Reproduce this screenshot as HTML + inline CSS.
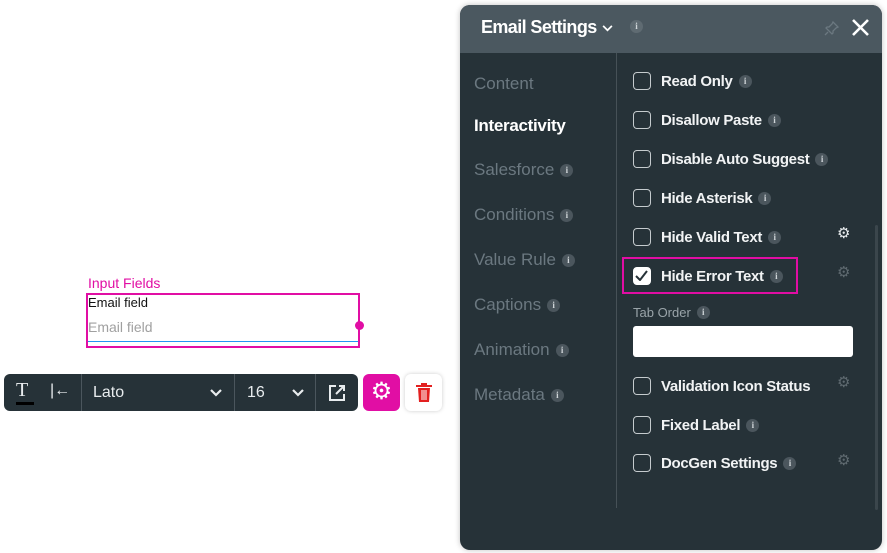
<!DOCTYPE html>
<html><head><meta charset="utf-8"><style>
*{margin:0;padding:0;box-sizing:border-box}
body{width:887px;height:553px;background:#fff;position:relative;overflow:hidden;font-family:"Liberation Sans",sans-serif}
.a{position:absolute}
.panel{left:460px;top:5px;width:422px;height:545px;background:#263238;border-radius:10px;overflow:hidden;box-shadow:0 0 6px rgba(0,0,0,.25)}
.hdr{left:0;top:0;width:422px;height:48px;background:#4b5860}
.nav{left:14px;font-size:17px;color:#6b7880;white-space:nowrap}
.i{display:inline-block;width:13px;height:13px;border-radius:50%;background:#4b565d;color:#cfd5d8;font-size:9px;font-weight:bold;text-align:center;line-height:13px;vertical-align:2px;margin-left:6px;font-family:"Liberation Serif",serif}
.row{left:173px;font-size:15px;font-weight:bold;color:#f1f3f4;white-space:nowrap;line-height:18px;letter-spacing:-0.3px}
.cb{display:inline-block;width:18px;height:18px;border:1.5px solid #c5cbce;border-radius:4px;vertical-align:-4px;margin-right:10px}
.gear{left:377px;font-size:15px;color:#5f6a70}
</style></head><body>
<div class="a" style="left:88px;top:275px;font-size:14px;color:#e10ea4">Input Fields</div>
<div class="a" style="left:86px;top:293px;width:274px;height:55px;border:2px solid #e10ea4"></div>
<div class="a" style="left:88px;top:295px;font-size:13px;color:#111">Email field</div>
<div class="a" style="left:88px;top:319px;font-size:14px;color:#a0a0a0">Email field</div>
<div class="a" style="left:88px;top:341px;width:270px;height:1px;background:#2196f3"></div>
<div class="a" style="left:355px;top:321px;width:9px;height:9px;border-radius:50%;background:#e10ea4"></div>
<div class="a" style="left:4px;top:374px;width:354px;height:37px;background:#263238;border-radius:6px;color:#e8ecee">
 <div class="a" style="left:12px;top:5px;font-size:20px;font-family:'Liberation Serif',serif">T</div>
 <div class="a" style="left:12px;top:28px;width:18px;height:3px;background:#000"></div>
 <div class="a" style="left:46px;top:8px;font-size:16px">|←</div>
 <div class="a" style="left:77px;top:0;width:1px;height:37px;background:#4b565d"></div>
 <div class="a" style="left:89px;top:10px;font-size:16px">Lato</div>
 <svg class="a" style="left:206px;top:15px" width="12" height="8" viewBox="0 0 12 8" fill="none" stroke="#e8ecee" stroke-width="2.2"><path d="M1 1l5 5 5-5"/></svg>
 <div class="a" style="left:230px;top:0;width:1px;height:37px;background:#4b565d"></div>
 <div class="a" style="left:243px;top:10px;font-size:16px">16</div>
 <svg class="a" style="left:288px;top:15px" width="12" height="8" viewBox="0 0 12 8" fill="none" stroke="#e8ecee" stroke-width="2.2"><path d="M1 1l5 5 5-5"/></svg>
 <div class="a" style="left:311px;top:0;width:1px;height:37px;background:#4b565d"></div>
 <svg class="a" style="left:324px;top:10px" width="18" height="18" viewBox="0 0 18 18" fill="none" stroke="#e8ecee" stroke-width="2"><path d="M8 2H2v14h14v-6M11 2h5v5M16 2L8 10"/></svg>
</div>
<div class="a" style="left:363px;top:374px;width:37px;height:37px;background:#e10ea4;border-radius:6px;color:#fff;font-size:24px;text-align:center;line-height:36px">⚙</div>
<div class="a" style="left:405px;top:374px;width:37px;height:37px;background:#fff;border-radius:6px;box-shadow:0 0 4px rgba(0,0,0,.2)">
 <svg class="a" style="left:11px;top:9px" width="16" height="19" viewBox="0 0 16 19"><rect x="0" y="2" width="16" height="2" fill="#e32020"/><rect x="5" y="0" width="6" height="2" fill="#e32020"/><path d="M2 5h12l-1 14H3z" fill="#e32020"/><path d="M6 7v10M8 7v10M10 7v10" stroke="#fff" stroke-width="1"/></svg>
</div>

<div class="a panel">
 <div class="a hdr"></div>
 <div class="a" style="left:21px;top:12px;font-size:18px;font-weight:bold;color:#fff;letter-spacing:-0.6px">Email Settings</div>
 <svg class="a" style="left:142px;top:20px" width="11" height="7" viewBox="0 0 12 8" fill="none" stroke="#fff" stroke-width="2"><path d="M1 1l5 5 5-5"/></svg>
 <div class="a" style="left:170px;top:15px;width:13px;height:13px;border-radius:50%;background:#5f6b72;color:#cfd5d8;font-size:9px;font-weight:bold;text-align:center;line-height:13px;font-family:'Liberation Serif',serif">i</div>
 <svg class="a" style="left:364px;top:16px" width="15" height="15" viewBox="0 0 15 15" fill="none" stroke="#6b7880" stroke-width="1.3"><path d="M9 1l5 5-2 1-3 3 0 2-1 1-6-6 1-1 2 0 3-3zM4 11l-3 3"/></svg>
 <svg class="a" style="left:392px;top:14px" width="17" height="17" viewBox="0 0 17 17" stroke="#fff" stroke-width="2.6"><path d="M1 1l15 15M16 1L1 16"/></svg>
 <div class="a" style="left:156px;top:48px;width:1px;height:455px;background:#465157"></div>
 <div class="a" style="left:415px;top:220px;width:3px;height:285px;background:#3b464c;border-radius:2px"></div>
 <div class="a nav" style="top:69px">Content</div>
 <div class="a nav" style="top:111px;color:#fff;font-weight:bold;letter-spacing:-0.3px">Interactivity</div>
 <div class="a nav" style="top:155px">Salesforce<span class="i">i</span></div>
 <div class="a nav" style="top:200px">Conditions<span class="i">i</span></div>
 <div class="a nav" style="top:245px">Value Rule<span class="i">i</span></div>
 <div class="a nav" style="top:290px">Captions<span class="i">i</span></div>
 <div class="a nav" style="top:335px">Animation<span class="i">i</span></div>
 <div class="a nav" style="top:380px">Metadata<span class="i">i</span></div>

 <div class="a row" style="top:67px"><span class="cb"></span>Read Only<span class="i">i</span></div>
 <div class="a row" style="top:106px"><span class="cb"></span>Disallow Paste<span class="i">i</span></div>
 <div class="a row" style="top:145px"><span class="cb"></span>Disable Auto Suggest<span class="i">i</span></div>
 <div class="a row" style="top:184px"><span class="cb"></span>Hide Asterisk<span class="i">i</span></div>
 <div class="a row" style="top:223px"><span class="cb"></span>Hide Valid Text<span class="i">i</span></div>
 <div class="a gear" style="top:219px;color:#e8ecee">⚙</div>
 <div class="a" style="left:162px;top:252px;width:176px;height:37px;border:2.5px solid #e10ea4"></div>
 <div class="a row" style="top:262px"><span class="cb" style="background:#fff;border-color:#fff;position:relative"><svg style="position:absolute;left:1px;top:2px" width="13" height="11" viewBox="0 0 13 11" fill="none" stroke="#263238" stroke-width="2"><path d="M1 6l4 4 7-9"/></svg></span>Hide Error Text<span class="i">i</span></div>
 <div class="a gear" style="top:258px">⚙</div>
 <div class="a" style="left:173px;top:300px;font-size:13px;color:#9aa4a9">Tab Order<span class="i">i</span></div>
 <div class="a" style="left:173px;top:321px;width:220px;height:31px;background:#fff;border-radius:3px"></div>
 <div class="a row" style="top:372px"><span class="cb"></span>Validation Icon Status</div>
 <div class="a gear" style="top:368px">⚙</div>
 <div class="a row" style="top:411px"><span class="cb"></span>Fixed Label<span class="i">i</span></div>
 <div class="a row" style="top:449px"><span class="cb"></span>DocGen Settings<span class="i">i</span></div>
 <div class="a gear" style="top:446px">⚙</div>
</div>
</body></html>
